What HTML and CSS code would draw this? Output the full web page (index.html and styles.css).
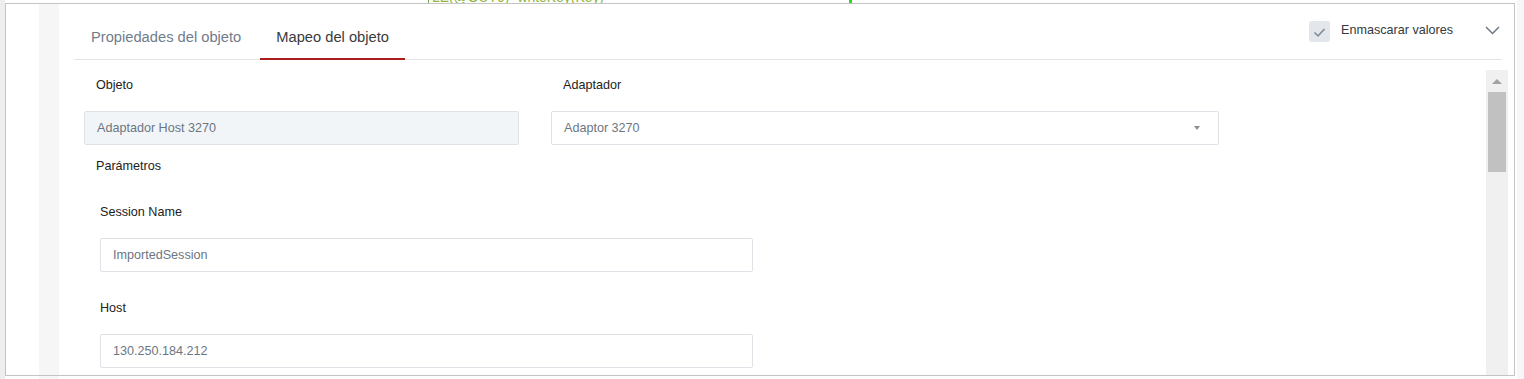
FILE: index.html
```html
<!DOCTYPE html>
<html lang="es">
<head>
<meta charset="utf-8">
<title>Mapeo del objeto</title>
<link rel="stylesheet" href="styles.css">
</head>
<body>
<div class="topstrip">
  <span class="code-line">LE(@OUT0)=writeKey(Key)</span>
  <span class="marker"></span>
</div>
<div class="card">
  <div class="gutter"></div>
  <div class="band"></div>
  <div class="main">
    <div class="header">
      <div class="tabs">
        <div class="tab">Propiedades del objeto</div>
        <div class="tab active">Mapeo del objeto</div>
      </div>
      <div class="controls">
        <span class="checkbox">
          <svg width="21" height="21" viewBox="0 0 21 21"><path d="M5.5 11.5 L9 15 L15.5 8" fill="none" stroke="#7b8693" stroke-width="1.5"/></svg>
        </span>
        <span class="mask-label">Enmascarar valores</span>
        <span class="chevron">
          <svg width="15" height="10" viewBox="0 0 15 10"><path d="M1 2 L7.5 8.5 L14 2" fill="none" stroke="#6b7886" stroke-width="1.5"/></svg>
        </span>
      </div>
    </div>
    <div class="body">
      <div class="content">
        <div class="row">
          <div class="field">
            <div class="label">Objeto</div>
            <div class="input disabled">Adaptador Host 3270</div>
          </div>
          <div class="field wide">
            <div class="label">Adaptador</div>
            <div class="input select">Adaptor 3270<span class="caret"></span></div>
          </div>
        </div>
        <div class="label section">Parámetros</div>
        <div class="params">
          <div class="pfield">
            <div class="plabel">Session Name</div>
            <div class="input pinput">ImportedSession</div>
          </div>
          <div class="pfield">
            <div class="plabel">Host</div>
            <div class="input pinput">130.250.184.212</div>
          </div>
        </div>
      </div>
      <div class="scrollbar">
        <div class="arrow-btn"><span class="arrow-up"></span></div>
        <div class="thumb"></div>
      </div>
    </div>
  </div>
</div>
</body>
</html>
```
FILE: styles.css
```css
* { box-sizing: border-box; }
html, body { margin: 0; padding: 0; }
body {
  width: 1524px;
  height: 379px;
  overflow: hidden;
  font-family: "Liberation Sans", Arial, sans-serif;
  background: linear-gradient(to right,
    #eeeeee 0, #eeeeee 5px,
    #ffffff 5px, #ffffff 39px,
    #f6f6f6 39px, #f6f6f6 59px,
    #ffffff 59px, #ffffff 1517px,
    #f7f7f7 1517px);
}
.topstrip {
  height: 3px;
  overflow: hidden;
  display: flex;
  align-items: flex-start;
  margin-left: 5px;
  width: 1512px;
  background: #ffffff;
}
.code-line {
  margin-left: 423px;
  margin-top: -10px;
  padding-left: 3px;
  border-left: 1px solid #6fa84a;
  font-size: 13.9px;
  line-height: 14px;
  color: #8fb43e;
  white-space: nowrap;
}
.marker {
  margin-left: 245px;
  width: 3px;
  height: 3px;
  background: #1fe01f;
}
.card {
  margin-left: 5px;
  width: 1510px;
  height: 373px;
  border: 1px solid #c4c4c4;
  display: flex;
  overflow: hidden;
}
.gutter { width: 33px; flex: none; }
.band { width: 20px; flex: none; background: #f6f6f6; }
.main {
  flex: 1;
  display: flex;
  flex-direction: column;
  padding-left: 15px;
  background: #ffffff;
  min-width: 0;
}
.header {
  display: flex;
  justify-content: space-between;
  align-items: flex-start;
  padding-top: 10px;
  margin-right: 12px;
  border-bottom: 1px solid #e4e4e4;
  height: 56px;
}
.tabs { display: flex; align-self: flex-end; gap: 3px; margin-left: 1px; }
.tab {
  height: 45px;
  line-height: 45px;
  padding: 0 16px;
  font-size: 14.7px;
  color: #6f7c8a;
  margin-bottom: -1px;
  border-bottom: 2px solid transparent;
}
.tab.active {
  color: #3a3a3a;
  border-bottom-color: #a91d1d;
}
.controls {
  display: flex;
  align-items: center;
  margin-top: 7px;
  margin-right: 2px;
  height: 21px;
}
.checkbox {
  width: 21px;
  height: 21px;
  border-radius: 3px;
  background: #e3e7eb;
  display: flex;
}
.mask-label {
  margin-left: 11px;
  font-size: 12.6px;
  color: #333a40;
  line-height: 21px;
  margin-top: -3px;
}
.chevron {
  margin-left: 32px;
  margin-top: -3px;
  width: 15px;
  height: 10px;
  display: flex;
}
.body {
  flex: 1;
  display: flex;
  margin-top: 10px;
  margin-right: 6px;
  min-height: 0;
}
.content {
  flex: 1;
  padding: 4px 0 0 10px;
}
.row { display: flex; gap: 32px; }
.field { width: 435px; }
.field.wide { width: 668px; }
.label {
  padding-left: 12px;
  padding-top: 1px;
  font-size: 12.6px;
  line-height: 20px;
  color: #222;
  margin-bottom: 16px;
}
.label.section { margin-top: 10px; margin-bottom: 25px; }
.input {
  height: 34px;
  border: 1px solid #dfe3e7;
  border-radius: 2px;
  padding: 0 12px;
  font-size: 12.6px;
  line-height: 32px;
  color: #6c7683;
  background: #ffffff;
}
.input.disabled { background: #f2f5f8; }
.input.select {
  display: flex;
  justify-content: space-between;
  align-items: center;
}
.caret {
  width: 0;
  height: 0;
  border-left: 3.5px solid transparent;
  border-right: 3.5px solid transparent;
  border-top: 4px solid #8f8f8f;
  margin-right: 6px;
}
.params { margin-left: 16px; }
.pfield { margin-bottom: 25px; }
.plabel {
  padding-top: 1px;
  font-size: 12.6px;
  line-height: 20px;
  color: #222;
  margin-bottom: 16px;
}
.pinput { width: 653px; }
.scrollbar {
  width: 22px;
  flex: none;
  background: #f0f0f0;
  display: flex;
  flex-direction: column;
  align-items: center;
}
.arrow-btn {
  height: 22px;
  width: 100%;
  display: flex;
  justify-content: center;
  padding-top: 9px;
}
.arrow-up {
  width: 0;
  height: 0;
  border-left: 5px solid transparent;
  border-right: 5px solid transparent;
  border-bottom: 5px solid #a3a3a3;
}
.thumb {
  width: 18px;
  height: 80px;
  background: #c1c1c1;
}
```
